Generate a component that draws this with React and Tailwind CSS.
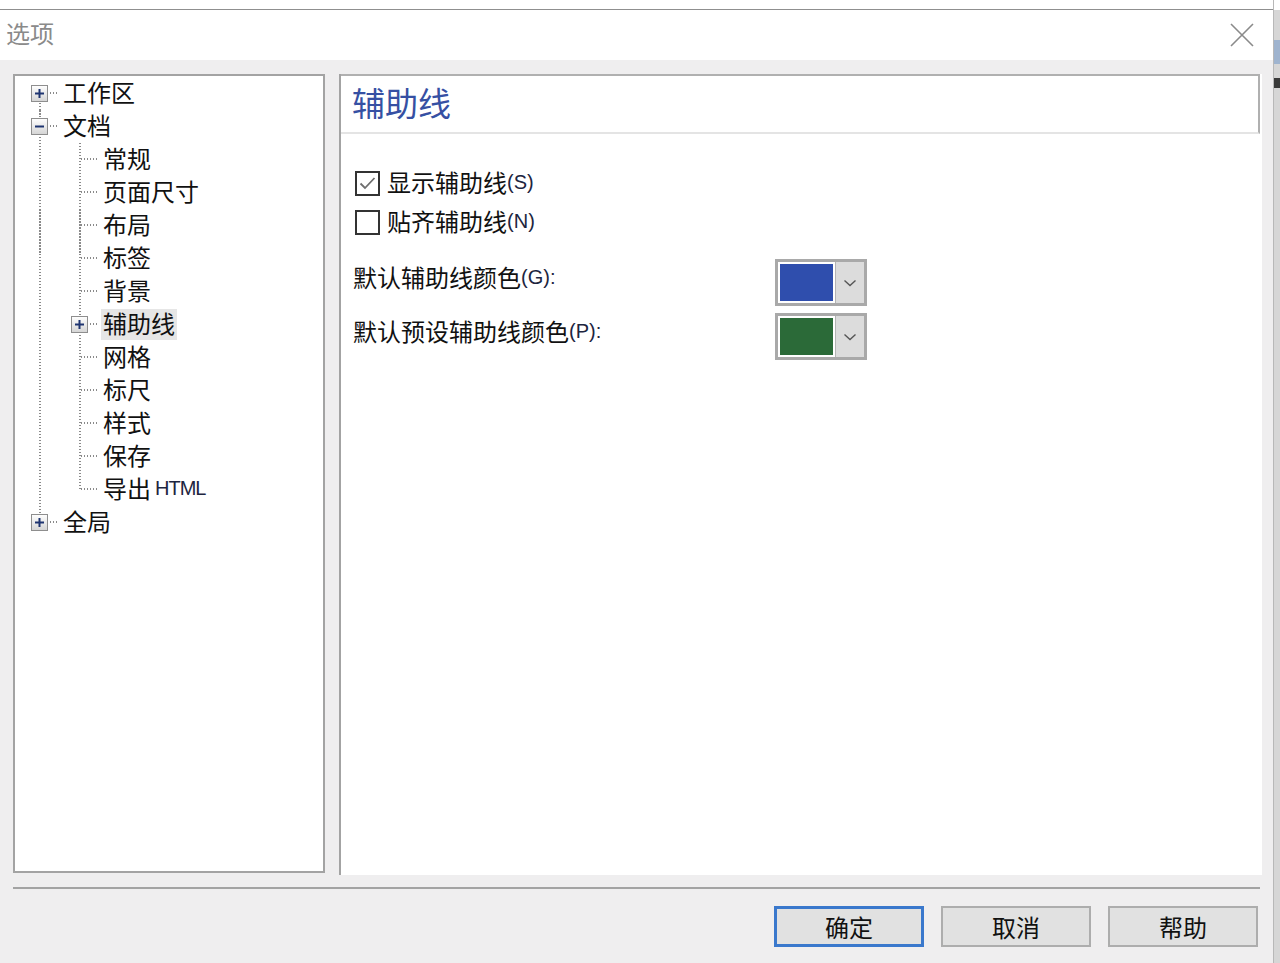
import React from 'react';

const cjk = "font-['Noto_Sans_CJK_SC','Noto_Sans_CJK_JP',sans-serif]";
const latin = "font-['Liberation_Sans','Noto_Sans',sans-serif]";

const vDots = 'w-[2px] bg-[repeating-linear-gradient(to_bottom,#8a8a8a_0px,#8a8a8a_1.5px,transparent_1.5px,transparent_3px)]';
const hDots = 'h-[2px] bg-[repeating-linear-gradient(to_right,#8a8a8a_0px,#8a8a8a_1.5px,transparent_1.5px,transparent_3px)]';

function TreeBox({ sign }) {
  return (
    <svg width="17" height="17" viewBox="0 0 17 17" className="absolute left-[11px] top-[8px]">
      <defs>
        <linearGradient id={`g-${sign}`} x1="0" y1="0" x2="0" y2="1">
          <stop offset="0" stopColor="#ffffff" />
          <stop offset="1" stopColor="#d4d4d4" />
        </linearGradient>
      </defs>
      <rect x="0.5" y="0.5" width="16" height="16" fill={`url(#g-${sign})`} stroke="#8e8e8e" />
      <path d="M4 8.5H13" stroke="#1e3470" strokeWidth="2" />
      {sign === 'plus' && <path d="M8.5 4V13" stroke="#1e3470" strokeWidth="2" />}
    </svg>
  );
}

// one 40px column of the tree guide lines
function Cell({ v, h, box }) {
  return (
    <div className="relative h-[33px] w-[40px] shrink-0">
      {v === 'full' && <div className={`absolute bottom-0 left-[19px] top-0 ${vDots}`} />}
      {v === 'top' && <div className={`absolute left-[19px] top-0 h-[16px] ${vDots}`} />}
      {v === 'bottom' && <div className={`absolute bottom-0 left-[19px] top-[17px] ${vDots}`} />}
      {h && <div className={`absolute left-[21px] right-[2px] top-[15px] ${hDots}`} />}
      {box && <TreeBox sign={box} />}
    </div>
  );
}

const treeRows = [
  { label: '工作区', cells: [{ v: 'bottom', h: true, box: 'plus' }] },
  { label: '文档', cells: [{ v: 'full', h: true, box: 'minus' }] },
  { label: '常规', cells: [{ v: 'full' }, { v: 'full', h: true }] },
  { label: '页面尺寸', cells: [{ v: 'full' }, { v: 'full', h: true }] },
  { label: '布局', cells: [{ v: 'full' }, { v: 'full', h: true }] },
  { label: '标签', cells: [{ v: 'full' }, { v: 'full', h: true }] },
  { label: '背景', cells: [{ v: 'full' }, { v: 'full', h: true }] },
  { label: '辅助线', selected: true, cells: [{ v: 'full' }, { v: 'full', h: true, box: 'plus' }] },
  { label: '网格', cells: [{ v: 'full' }, { v: 'full', h: true }] },
  { label: '标尺', cells: [{ v: 'full' }, { v: 'full', h: true }] },
  { label: '样式', cells: [{ v: 'full' }, { v: 'full', h: true }] },
  { label: '保存', cells: [{ v: 'full' }, { v: 'full', h: true }] },
  { label: '导出', extra: 'HTML', cells: [{ v: 'full' }, { v: 'top', h: true }] },
  { label: '全局', cells: [{ v: 'top', h: true, box: 'plus' }] },
];

function Checkbox({ checked, label, key_ }) {
  return (
    <div className="flex h-[39px] items-center pl-[14px]">
      <div className="flex h-[25px] w-[25px] items-center justify-center border-2 border-[#333333] bg-white">
        {checked && (
          <svg width="19" height="19" viewBox="0 0 19 19">
            <path d="M2.5 9.5L7 14L16.5 4" fill="none" stroke="#6e6e6e" strokeWidth="1.8" />
          </svg>
        )}
      </div>
      <div className="ml-[7px] flex items-center pb-[3px]">
        <span className="text-[24px] leading-none text-[#111111]">{label}</span>
        <span className={`${latin} text-[20px] leading-none text-[#1d2540]`}>({key_})</span>
      </div>
    </div>
  );
}

function ColorPicker({ color }) {
  return (
    <div className="flex h-[47px] w-[92px] border-[3px] border-[#a9a9a9] bg-white">
      <div className="w-[57px] p-[2px]">
        <div className={`h-full w-full ${color}`} />
      </div>
      <div className="flex flex-1 items-center justify-center border-l border-[#b4b4b4] bg-[#dcdcdc]">
        <svg width="14" height="10" viewBox="0 0 14 10">
          <path d="M1.5 2.5L7 7.5L12.5 2.5" fill="none" stroke="#555555" strokeWidth="1.4" />
        </svg>
      </div>
    </div>
  );
}

function Button({ children, primary }) {
  return (
    <button
      className={`flex h-[41px] w-[150px] items-center justify-center bg-[#e1e1e1] text-[24px] text-[#111111] ${
        primary ? 'border-[3px] border-[#3a78cc]' : 'border-2 border-[#adadad]'
      }`}
    >
      {children}
    </button>
  );
}

export default function App() {
  return (
    <div className={`${cjk} flex h-[963px] w-[1280px] overflow-hidden bg-white`}>
      <div className="flex w-[1273px] flex-col">
        {/* strip of the window behind */}
        <div className="h-[10px] border-b border-[#8f8f8f] bg-white" />

        {/* title bar */}
        <div className="flex h-[50px] items-center justify-between bg-white pl-[6px] pr-[18px]">
          <span className="pb-[4px] text-[24px] text-[#8a8a8a]">选项</span>
          <svg width="26" height="26" viewBox="0 0 26 26">
            <path d="M2 2L24 24M24 2L2 24" stroke="#8a8a8a" strokeWidth="1.6" />
          </svg>
        </div>

        {/* body */}
        <div className="flex flex-1 flex-col bg-[#efeeef] pl-[13px] pr-[11px] pt-[14px]">
          <div className="flex h-[801px] gap-[14px]">
            {/* tree */}
            <div className="h-[799px] w-[312px] border-2 border-[#a3a3a3] bg-white pl-[5px] pt-[1px]">
              {treeRows.map((row) => (
                <div key={row.label} className="flex h-[33px] items-center">
                  {row.cells.map((c, i) => (
                    <Cell key={i} {...c} />
                  ))}
                  <span
                    className={`ml-[1px] flex h-[31px] items-center px-[2px] pb-[4px] text-[24px] leading-none text-[#111111] ${
                      row.selected ? 'bg-[#e6e6e6]' : ''
                    }`}
                  >
                    {row.label}
                    {row.extra && <span className={`${latin} ml-[4px] text-[20px] tracking-[-1px] text-[#1d2540]`}>{row.extra}</span>}
                  </span>
                </div>
              ))}
            </div>

            {/* page */}
            <div className="flex w-[923px] flex-col border-l-2 border-[#a3a3a3] bg-white">
              <div className="mr-[2px] flex h-[60px] items-center border-b-2 border-r-2 border-t-2 border-b-[#e4e4e4] border-r-[#b0b0b0] border-t-[#b0b0b0] pl-[11px]">
                <span className="pb-[4px] text-[33px] leading-none text-[#3650a3]">辅助线</span>
              </div>

              <div className="pt-[30px]">
                <Checkbox checked label="显示辅助线" key_="S" />
                <Checkbox label="贴齐辅助线" key_="N" />

                <div className="mt-[17px] flex h-[47px] items-center pl-[12px]">
                  <div className="flex w-[422px] items-center pb-[11px]">
                    <span className="text-[24px] leading-none text-[#111111]">默认辅助线颜色</span>
                    <span className={`${latin} text-[20px] leading-none text-[#1d2540]`}>(G):</span>
                  </div>
                  <ColorPicker color="bg-[#2f4ead]" />
                </div>
                <div className="mt-[7px] flex h-[47px] items-center pl-[12px]">
                  <div className="flex w-[422px] items-center pb-[11px]">
                    <span className="text-[24px] leading-none text-[#111111]">默认预设辅助线颜色</span>
                    <span className={`${latin} text-[20px] leading-none text-[#1d2540]`}>(P):</span>
                  </div>
                  <ColorPicker color="bg-[#2b6a38]" />
                </div>
              </div>
            </div>
          </div>

          <div className="mt-[12px] w-[1247px] border-t-2 border-[#a3a3a3]" />

          <div className="mt-[17px] flex justify-end gap-[17px] pr-[4px]">
            <Button primary>确定</Button>
            <Button>取消</Button>
            <Button>帮助</Button>
          </div>
        </div>
      </div>

      {/* edge of the window behind */}
      <div className="flex w-[7px] flex-col border-l border-[#b8b8b8] bg-[#d6d6d6]">
        <div className="h-[10px] bg-white" />
        <div className="mt-[30px] h-[24px] bg-[#9fb4cf]" />
        <div className="mt-[14px] h-[10px] bg-[#3a3a3a]" />
      </div>
    </div>
  );
}
